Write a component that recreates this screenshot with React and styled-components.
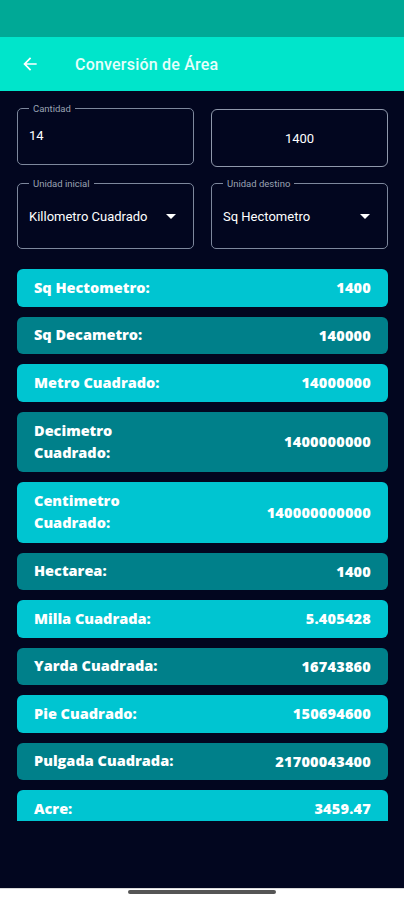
import React from 'react';
import styled, { createGlobalStyle } from 'styled-components';

const bg = '#02061f';

const rows = [
  ['Sq Hectometro:', '1400'],
  ['Sq Decametro:', '140000'],
  ['Metro Cuadrado:', '14000000'],
  ['Decimetro Cuadrado:', '1400000000', true],
  ['Centimetro Cuadrado:', '140000000000', true],
  ['Hectarea:', '1400'],
  ['Milla Cuadrada:', '5.405428'],
  ['Yarda Cuadrada:', '16743860'],
  ['Pie Cuadrado:', '150694600'],
  ['Pulgada Cuadrada:', '21700043400'],
  ['Acre:', '3459.47'],
];

export default function App() {
  return (
    <Screen>
      <GlobalStyle />
      <StatusBar />
      <AppBar>
        <BackArrow viewBox="0 0 24 24">
          <path d="M20 11H7.83l5.59-5.59L12 4l-8 8 8 8 1.41-1.41L7.83 13H20v-2z" fill="#ffffff" />
        </BackArrow>
        <Title>Conversión de Área</Title>
      </AppBar>
      <Body>
        <FieldRow>
          <Field>
            <Legend>Cantidad</Legend>
            <FieldText>14</FieldText>
          </Field>
          <ResultBox>1400</ResultBox>
        </FieldRow>
        <FieldRow>
          <Field tall>
            <Legend>Unidad inicial</Legend>
            <SelectText>Killometro Cuadrado</SelectText>
            <Caret />
          </Field>
          <Field tall>
            <Legend>Unidad destino</Legend>
            <SelectText>Sq Hectometro</SelectText>
            <Caret />
          </Field>
        </FieldRow>
        <List>
          {rows.map(([label, value, wrap], i) => (
            <Card key={label} dark={i % 2 === 1} wrap={wrap}>
              <Label wrap={wrap}>{label}</Label>
              <Value>{value}</Value>
            </Card>
          ))}
        </List>
      </Body>
      <NavArea>
        <HomeBar />
      </NavArea>
    </Screen>
  );
}

const GlobalStyle = createGlobalStyle`
  html, body {
    margin: 0;
    padding: 0;
    background: ${bg};
  }
  * {
    box-sizing: border-box;
  }
`;

const Screen = styled.div`
  width: 404px;
  height: 900px;
  display: flex;
  flex-direction: column;
  background: ${bg};
  font-family: Roboto, "Liberation Sans", sans-serif;
  overflow: hidden;
`;

const StatusBar = styled.div`
  height: 37px;
  flex: none;
  background: #00a996;
`;

const AppBar = styled.div`
  height: 54px;
  flex: none;
  display: flex;
  align-items: center;
  padding-left: 20px;
  background: #00e5cb;
`;

const BackArrow = styled.svg`
  width: 20px;
  height: 20px;
`;

const Title = styled.div`
  margin-left: 35px;
  color: #e6fffb;
  font-size: 16px;
  font-weight: 500;
  letter-spacing: 0.2px;
`;

const Body = styled.div`
  flex: none;
  height: 797px;
  padding: 11px 16px 0 17px;
  display: flex;
  flex-direction: column;
`;

const FieldRow = styled.div`
  display: grid;
  grid-template-columns: 177px 177px;
  gap: 17px;
  margin-bottom: 10px;
`;

const Field = styled.fieldset`
  position: relative;
  margin: 0;
  height: ${p => (p.tall ? '72px' : '63px')};
  padding: 0 11px;
  border: 1px solid #7d879c;
  border-radius: 5px;
  display: flex;
  align-items: center;
  ${p => p.tall && 'padding-bottom: 6px;'}
`;

const Legend = styled.legend`
  padding: 0 4px;
  margin-left: 0;
  font-size: 9.5px;
  color: #9aa2b2;
  line-height: 13px;
`;

const FieldText = styled.div`
  color: #ffffff;
  font-size: 13px;
  margin-bottom: 9px;
`;

const ResultBox = styled.div`
  margin-top: 7px;
  height: 58px;
  border: 1.5px solid #8f98ab;
  border-radius: 6px;
  display: flex;
  align-items: center;
  justify-content: center;
  color: #ffffff;
  font-size: 13px;
`;

const SelectText = styled.div`
  flex: 1;
  color: #ffffff;
  font-size: 13px;
  white-space: nowrap;
`;

const Caret = styled.div`
  width: 0;
  height: 0;
  margin-right: 6px;
  border-left: 5px solid transparent;
  border-right: 5px solid transparent;
  border-top: 5px solid #ffffff;
`;

const List = styled.div`
  margin-top: 10px;
  height: 552px;
  overflow: hidden;
  display: flex;
  flex-direction: column;
  gap: 10px;
`;

const Card = styled.div`
  flex: none;
  width: 371px;
  height: ${p => (p.wrap ? '60.5px' : '37.5px')};
  padding: 0 17px;
  border-radius: 6px;
  background: ${p => (p.dark ? '#00808a' : '#00c5d1')};
  display: flex;
  align-items: center;
  justify-content: space-between;
  color: #ffffff;
  font-family: "Open Sans", "DejaVu Sans", sans-serif;
  font-weight: 800;
  font-size: 14.5px;
`;

const Label = styled.div`
  width: ${p => (p.wrap ? '110px' : 'auto')};
  line-height: 22px;
`;

const Value = styled.div`
  letter-spacing: 0.2px;
`;

const NavArea = styled.div`
  flex: 1;
  background: #ffffff;
  display: flex;
  justify-content: center;
  border-top: 1px solid #d8d8d8;
`;

const HomeBar = styled.div`
  margin-top: 1px;
  width: 148px;
  height: 4px;
  border-radius: 2px;
  background: #555555;
`;
